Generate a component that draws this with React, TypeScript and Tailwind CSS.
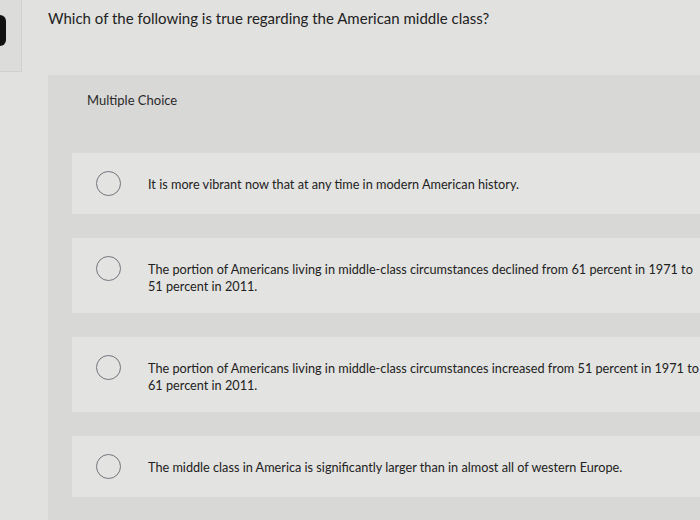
import React from "react";

const options = [
  "It is more vibrant now that at any time in modern American history.",
  "The portion of Americans living in middle-class circumstances declined from 61 percent in 1971 to 51 percent in 2011.",
  "The portion of Americans living in middle-class circumstances increased from 51 percent in 1971 to 61 percent in 2011.",
  "The middle class in America is significantly larger than in almost all of western Europe.",
];

function Option({ text }: { text: string }) {
  return (
    <div className="flex items-start bg-[#e3e3e1] pl-6 pt-[18px] pb-[18px]">
      <div className="h-[25px] w-[25px] shrink-0 rounded-full border-[1.5px] border-[#74747c]" />
      <p className="ml-[27px] mt-[5px] text-[12.7px] leading-[17px] text-[#222]">{text}</p>
    </div>
  );
}

export default function App() {
  return (
    <div
      className="relative h-[520px] w-[700px] overflow-hidden bg-[#e1e1df]"
      style={{ fontFamily: "Lato, 'Open Sans', sans-serif" }}
    >
      {/* phone bezel bits at the left edge */}
      <div className="absolute left-0 top-0 h-[72px] w-[22px] border-b border-r border-[#d0d0ce] bg-[#dcdcda]" />
      <div className="absolute left-0 top-[15px] h-[31px] w-[6px] rounded-r-full bg-[#111]" />

      <div className="pl-12 pt-[8px]">
        <h1 className="text-[15px] leading-[20px] text-[#222]">
          Which of the following is true regarding the American middle class?
        </h1>

        <div className="mt-[47px] h-[460px] bg-[#d8d8d6]">
          <div className="pl-[39px] pt-[17px] text-[13px] leading-[17px] text-[#2a2a2a]">
            Multiple Choice
          </div>
          <div className="ml-6 mt-[44px] flex flex-col gap-6">
            {options.map((o) => (
              <Option key={o} text={o} />
            ))}
          </div>
        </div>
      </div>
    </div>
  );
}
